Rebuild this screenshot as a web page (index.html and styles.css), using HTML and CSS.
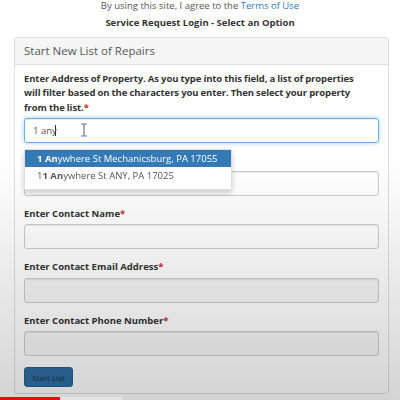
FILE: index.html
```html
<!DOCTYPE html>
<html>
<head>
<meta charset="utf-8">
<link rel="stylesheet" href="styles.css">
</head>
<body>
<p class="terms">By using this site, I agree to the <a href="#">Terms of Use</a></p>
<p class="title">Service Request Login - Select an Option</p>
<div class="panel">
  <div class="panel-heading">Start New List of Repairs</div>
  <div class="panel-body">
    <div class="form-group">
      <label class="long">Enter Address of Property. As you type into this field, a list of properties will filter based on the characters you enter. Then select your property from the list.<span class="req">*</span></label>
      <div class="field">
        <input class="input focus" type="text" value="1 any">
        <span class="caret"></span>
        <svg class="ibeam" width="8" height="14" viewBox="0 0 8 14"><path d="M1 1h6M4 1v12M1 13h6" stroke="#777" stroke-width="1.2" fill="none"/></svg>
        <ul class="menu">
          <li class="active"><strong>1 An</strong>ywhere St Mechanicsburg, PA 17055</li>
          <li>1<strong>1 An</strong>ywhere St ANY, PA 17025</li>
        </ul>
      </div>
    </div>
    <div class="form-group">
      <label>Selected Property<span class="req">*</span></label>
      <input class="input" type="text">
    </div>
    <div class="form-group">
      <label>Enter Contact Name<span class="req">*</span></label>
      <input class="input" type="text">
    </div>
    <div class="form-group">
      <label>Enter Contact Email Address<span class="req">*</span></label>
      <input class="input muted" type="text">
    </div>
    <div class="form-group">
      <label>Enter Contact Phone Number<span class="req">*</span></label>
      <input class="input muted" type="text">
    </div>
    <button class="btn">Start List</button>
  </div>
</div>
<div class="vignette"></div>
<div class="progress"><div class="played"></div></div>
</body>
</html>
```

FILE: styles.css
```css
html, body {
  margin: 0;
  padding: 0;
  background: #fff;
  font-family: "Open Sans", "Liberation Sans", sans-serif;
  font-size: 9.5px;
  color: #333;
  overflow: hidden;
  height: 400px;
}
.terms {
  margin: -1px 0 0;
  line-height: 13px;
  text-align: center;
  color: #555;
}
.terms a {
  color: #337ab7;
  text-decoration: none;
}
.title {
  margin: 4px 0 0;
  line-height: 14px;
  text-align: center;
  font-weight: 700;
  color: #333;
}
.panel {
  margin: 7px 11px 0 14px;
  border: 1px solid #ddd;
  border-radius: 3px;
  background: #fff;
}
.panel-heading {
  padding: 6px 9px;
  line-height: 14px;
  font-size: 11.5px;
  color: #555;
  background: #f5f5f5;
  border-bottom: 1px solid #ddd;
  border-radius: 3px 3px 0 0;
}
.panel-body {
  padding: 7px 9px 6px;
}
.form-group {
  margin-bottom: 11px;
}
label {
  display: block;
  font-weight: 700;
  line-height: 14.3px;
  margin-bottom: 3px;
  color: #333;
}
label.long {
  letter-spacing: -0.1px;
  word-spacing: -0.2px;
  padding-right: 12px;
}
.req {
  color: #c9302c;
}
.field {
  position: relative;
}
.input {
  display: block;
  box-sizing: border-box;
  width: 100%;
  height: 25px;
  margin: 0;
  padding: 0 8px;
  border: 1px solid #ccc;
  border-radius: 3px;
  background: #fff;
  font-family: inherit;
  font-size: 9.5px;
  color: #555;
  box-shadow: inset 0 1px 1px rgba(0,0,0,.075);
  outline: none;
}
.input.focus {
  border-color: #66afe9;
  box-shadow: inset 0 1px 1px rgba(0,0,0,.075), 0 0 5px rgba(102,175,233,.6);
}
.input.muted {
  background: #f7f7f7;
}
.caret {
  position: absolute;
  left: 31px;
  top: 7px;
  width: 1px;
  height: 11px;
  background: #333;
}
.ibeam {
  position: absolute;
  left: 56px;
  top: 5px;
}
.menu {
  position: absolute;
  left: 0;
  top: 31px;
  width: 208px;
  box-sizing: border-box;
  margin: 0;
  padding: 0 0 5px;
  list-style: none;
  background: #fff;
  border: 1px solid rgba(0,0,0,.12);
  box-shadow: 0 3px 6px rgba(0,0,0,.18);
  z-index: 2;
}
.menu li {
  padding: 2px 12px;
  line-height: 13px;
  color: #555;
  white-space: nowrap;
}
.menu li.active {
  background: #337ab7;
  color: #fff;
}
.btn {
  display: block;
  height: 20px;
  padding: 0 7px;
  border: 1px solid #2a5f8a;
  border-radius: 3px;
  background: #2f6fa2;
  color: #17324d;
  font-family: inherit;
  font-size: 8px;
}
.vignette {
  position: fixed;
  inset: 0;
  pointer-events: none;
  background: linear-gradient(to bottom, rgba(0,0,0,0) 40%, rgba(0,0,0,0.17) 100%);
}
.progress {
  position: fixed;
  left: 0;
  bottom: 0;
  width: 122px;
  height: 3px;
  background: #e4e4e4;
}
.played {
  width: 60px;
  height: 3px;
  background: #f00;
}
```
